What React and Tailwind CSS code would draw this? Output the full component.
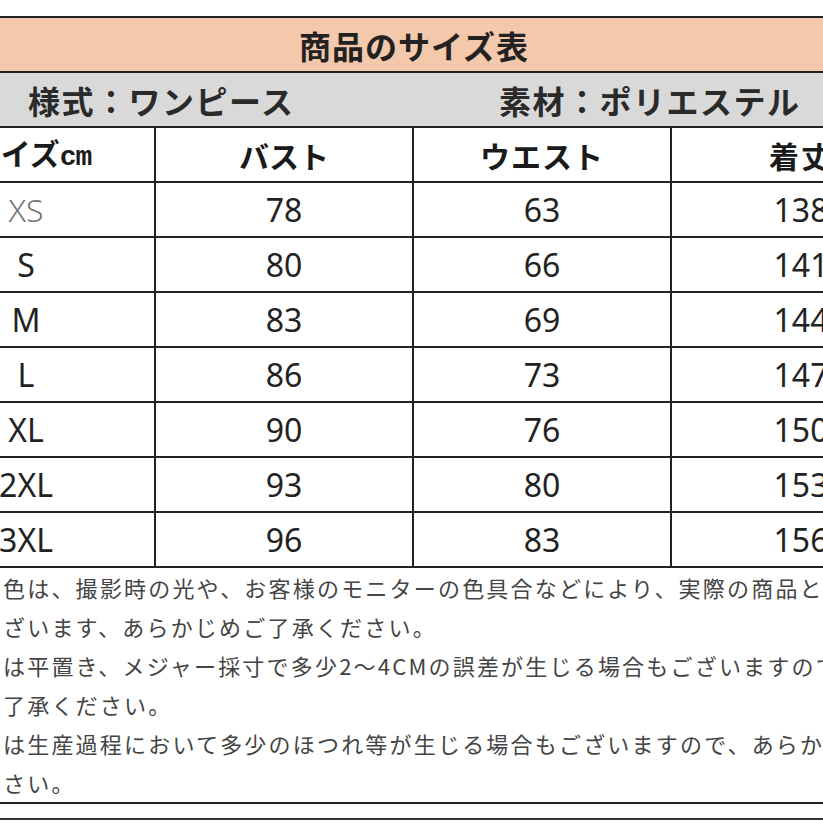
const rows = [
  ["XS", "78", "63", "138"],
  ["S", "80", "66", "141"],
  ["M", "83", "69", "144"],
  ["L", "86", "73", "147"],
  ["XL", "90", "76", "150"],
  ["2XL", "93", "80", "153"],
  ["3XL", "96", "83", "156"],
];

const notes = [
  "色は、撮影時の光や、お客様のモニターの色具合などにより、実際の商品と",
  "ざいます、あらかじめご了承ください。",
  "は平置き、メジャー採寸で多少2〜4CMの誤差が生じる場合もございますので",
  "了承ください。",
  "は生産過程において多少のほつれ等が生じる場合もございますので、あらか",
  "さい。",
];

export default function App() {
  return (
    <div className="w-[823px] h-[823px] overflow-hidden bg-white pt-[16px] font-['Noto_Sans_CJK_JP',sans-serif]">
      <div className="ml-[-102px] w-[1032px]">
        <div className="h-[57px] border-y-2 border-[#222] bg-[#f3c8ab] flex items-center justify-center text-[32px] font-bold tracking-[1px] text-[#222] leading-none">
          商品のサイズ表
        </div>
        <div className="h-[55px] border-b-2 border-[#222] bg-[#d9d9d9] flex items-center text-[32px] font-bold tracking-[1.5px] text-[#2a2a2a] leading-none">
          <span className="w-[601px] pl-[130px]">様式：ワンピース</span>
          <span>素材：ポリエステル</span>
        </div>
        <div className="h-[55px] border-b-2 border-[#222] grid grid-cols-[258px_258px_258px_258px] text-[30px] font-bold text-[#1a1a1a] leading-none">
          <div className="border-r-2 border-[#222] flex items-center justify-center pl-[10px]">
            <span>
              サイズ<span className="font-['Liberation_Mono',monospace] text-[28px] tracking-[-1px]">cm</span>
            </span>
          </div>
          <div className="border-r-2 border-[#222] flex items-center justify-center">バスト</div>
          <div className="border-r-2 border-[#222] flex items-center justify-center tracking-[1px]">ウエスト</div>
          <div className="flex items-center justify-center tracking-[2px]">着丈</div>
        </div>
        {rows.map((r) => (
          <div
            key={r[0]}
            className="h-[55px] border-b-2 border-[#222] grid grid-cols-[258px_258px_258px_258px] text-[32px] text-[#222] leading-none font-['Noto_Sans',sans-serif]"
          >
            <div
              className={
                "border-r-2 border-[#222] flex items-center justify-center " +
                (r[0] === "XS" ? "font-light text-[#777]" : "text-[#222]")
              }
            >
              {r[0]}
            </div>
            <div className="border-r-2 border-[#222] flex items-center justify-center">{r[1]}</div>
            <div className="border-r-2 border-[#222] flex items-center justify-center">{r[2]}</div>
            <div className="flex items-center justify-center">{r[3]}</div>
          </div>
        ))}
        <div className="h-[236px] border-b-2 border-[#222] pl-[105px] text-[22px] leading-[39px] tracking-[2.2px] text-[#444] whitespace-nowrap overflow-hidden">
          {notes.map((n, i) => (
            <div key={i}>{n}</div>
          ))}
        </div>
        <div className="mt-[14px] border-t-2 border-[#333]"></div>
      </div>
    </div>
  );
}
